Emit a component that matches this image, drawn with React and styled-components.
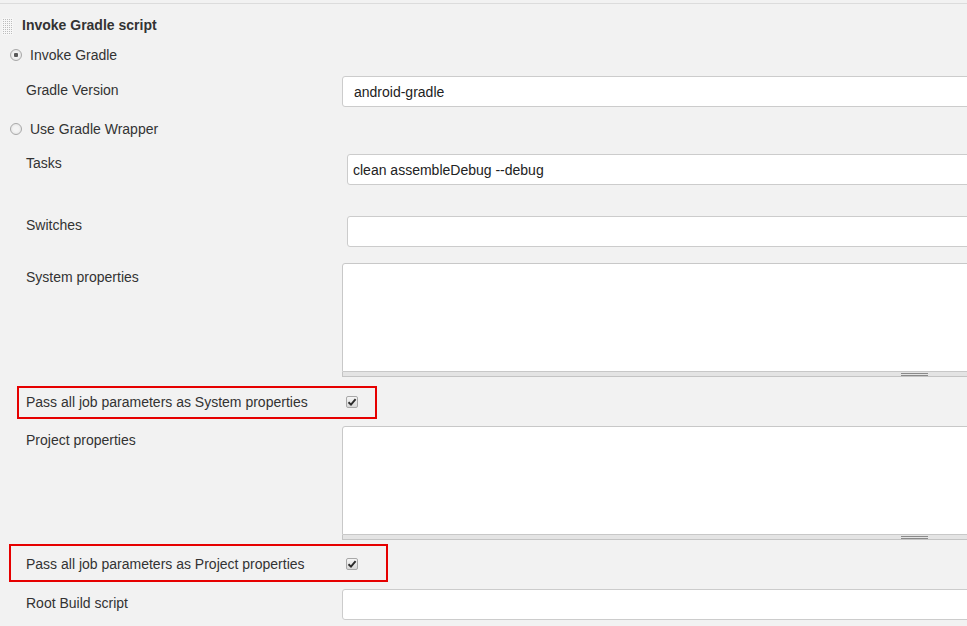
import React from 'react'
import styled, { createGlobalStyle } from 'styled-components';

const GlobalStyle = createGlobalStyle`
  html, body {
    margin: 0;
    background: #f2f2f2;
    overflow: hidden;
  }
  body {
    font-family: "Liberation Sans", Arial, Helvetica, sans-serif;
    font-size: 14px;
    color: #333;
  }
`;

const App = () => {
    return (
        <>
            <GlobalStyle />
            <Page>
                <Header>
                    <Grip />
                    <Title>Invoke Gradle script</Title>
                </Header>

                <RadioRow $top={6}>
                    <Radio $checked />
                    <RadioLabel>Invoke Gradle</RadioLabel>
                </RadioRow>
                <FieldRow $top={10}>
                    <Label $pad={6}>Gradle Version</Label>
                    <TextInput readOnly value="android-gradle" $pad={11} />
                </FieldRow>

                <RadioRow $top={11}>
                    <Radio />
                    <RadioLabel>Use Gradle Wrapper</RadioLabel>
                </RadioRow>
                <FieldRow $top={14}>
                    <Label $pad={1}>Tasks</Label>
                    <TextInput readOnly value="clean assembleDebug --debug" $indent={5} $pad={5} />
                </FieldRow>
                <FieldRow $top={31}>
                    <Label $pad={1}>Switches</Label>
                    <TextInput readOnly value="" $indent={5} $pad={5} />
                </FieldRow>

                <FieldRow $top={16}>
                    <Label $pad={6}>System properties</Label>
                    <AreaField>
                        <TextArea readOnly />
                        <ResizeStrip><ResizeGrip /></ResizeStrip>
                    </AreaField>
                </FieldRow>

                <Callout $top={9} $left={17} $width={360} $height={33} $pad={7} $shift={-2}>
                    <CheckLabel>Pass all job parameters as System properties</CheckLabel>
                    <CheckBox />
                </Callout>

                <FieldRow $top={7}>
                    <Label $pad={6}>Project properties</Label>
                    <AreaField>
                        <TextArea readOnly />
                        <ResizeStrip><ResizeGrip /></ResizeStrip>
                    </AreaField>
                </FieldRow>

                <Callout $top={4} $left={9} $width={379} $height={38} $pad={15} $shift={2}>
                    <CheckLabel>Pass all job parameters as Project properties</CheckLabel>
                    <CheckBox />
                </Callout>

                <FieldRow $top={7}>
                    <Label $pad={6}>Root Build script</Label>
                    <TextInput readOnly value="" $pad={11} />
                </FieldRow>
            </Page>
        </>
    );
};

const CheckBox = () => (
    <CheckBoxBox>
        <svg width="10" height="10" viewBox="0 0 10 10">
            <path d="M1.5 5.2 L4 7.6 L8.6 2.2" fill="none" stroke="#2b2b2b" strokeWidth="1.9" />
        </svg>
    </CheckBoxBox>
);

export default App;



const Page = styled.div`
  margin-top: 3px;
  border-top: 1px solid #dcdcdc;
  width: 967px;
  overflow: hidden;
  display: flex;
  flex-direction: column;
`;

const Header = styled.div`
  box-sizing: border-box;
  height: 34px;
  padding-top: 8px;
  display: flex;
  align-items: center;
`;

const Grip = styled.span`
  width: 11px;
  height: 17px;
  margin-left: 2px;
  margin-top: 2px;
  background-color: #bdbdbd;
  background-image:
    linear-gradient(90deg, #f7f7f7 1px, transparent 1px),
    linear-gradient(#f7f7f7 1px, transparent 1px);
  background-size: 2px 2px;
`;

const Title = styled.span`
  margin-left: 9px;
  font-weight: bold;
  color: #333;
`;

const RadioRow = styled.div`
  margin-top: ${p => p.$top}px;
  height: 22px;
  display: flex;
  align-items: center;
  padding-left: 10px;
`;

const Radio = styled.span`
  box-sizing: border-box;
  width: 12px;
  height: 12px;
  border-radius: 50%;
  border: 1px solid #a9a9a9;
  background: radial-gradient(circle, ${p => p.$checked ? '#5a5a5a 0 2px, ' : ''}#f4f4f4 2.5px, #dedede 100%);
`;

const RadioLabel = styled.span`
  margin-left: 8px;
  line-height: 16px;
`;

const FieldRow = styled.div`
  margin-top: ${p => p.$top}px;
  padding-left: 26px;
  display: grid;
  grid-template-columns: 316px 1145px;
`;

const Label = styled.div`
  padding-top: ${p => p.$pad}px;
  line-height: 16px;
  color: #333;
`;

const TextInput = styled.input`
  box-sizing: border-box;
  height: 31px;
  width: calc(100% - ${p => p.$indent || 0}px);
  margin: 0 0 0 ${p => p.$indent || 0}px;
  padding: 0 0 0 ${p => p.$pad}px;
  border: 1px solid #cccccc;
  border-radius: 3px;
  background: #fff;
  font-family: inherit;
  font-size: 14px;
  color: #222;
  outline: none;
`;

const AreaField = styled.div`
  display: flex;
  flex-direction: column;
`;

const TextArea = styled.textarea`
  box-sizing: border-box;
  display: block;
  height: 109px;
  width: 100%;
  margin: 0;
  border: 1px solid #c8c8c8;
  border-radius: 3px 3px 0 0;
  background: #fff;
  resize: none;
  outline: none;
`;

const ResizeStrip = styled.div`
  box-sizing: border-box;
  height: 5px;
  display: flex;
  justify-content: center;
  padding-top: 1px;
  background: #e4e4e4;
  border: 1px solid #c4c4c4;
  border-top: none;
`;

const ResizeGrip = styled.span`
  box-sizing: border-box;
  width: 27px;
  height: 3px;
  border-top: 1px solid #8a8a8a;
  border-bottom: 1px solid #8a8a8a;
`;

const Callout = styled.div`
  box-sizing: border-box;
  margin-top: ${p => p.$top}px;
  margin-left: ${p => p.$left}px;
  width: ${p => p.$width}px;
  height: ${p => p.$height}px;
  padding-left: ${p => p.$pad}px;
  padding-top: ${p => Math.max(p.$shift, 0)}px;
  padding-bottom: ${p => Math.max(-p.$shift, 0)}px;
  border: 2px solid #e60000;
  display: flex;
  align-items: center;
`;

const CheckLabel = styled.span`
  width: 320px;
  line-height: 16px;
  color: #333;
`;

const CheckBoxBox = styled.span`
  box-sizing: border-box;
  width: 12px;
  height: 12px;
  border: 1px solid #a8a8a8;
  border-radius: 2px;
  background: linear-gradient(#f6f6f6, #d8d8d8);
  display: flex;
  align-items: center;
  justify-content: center;
`;
